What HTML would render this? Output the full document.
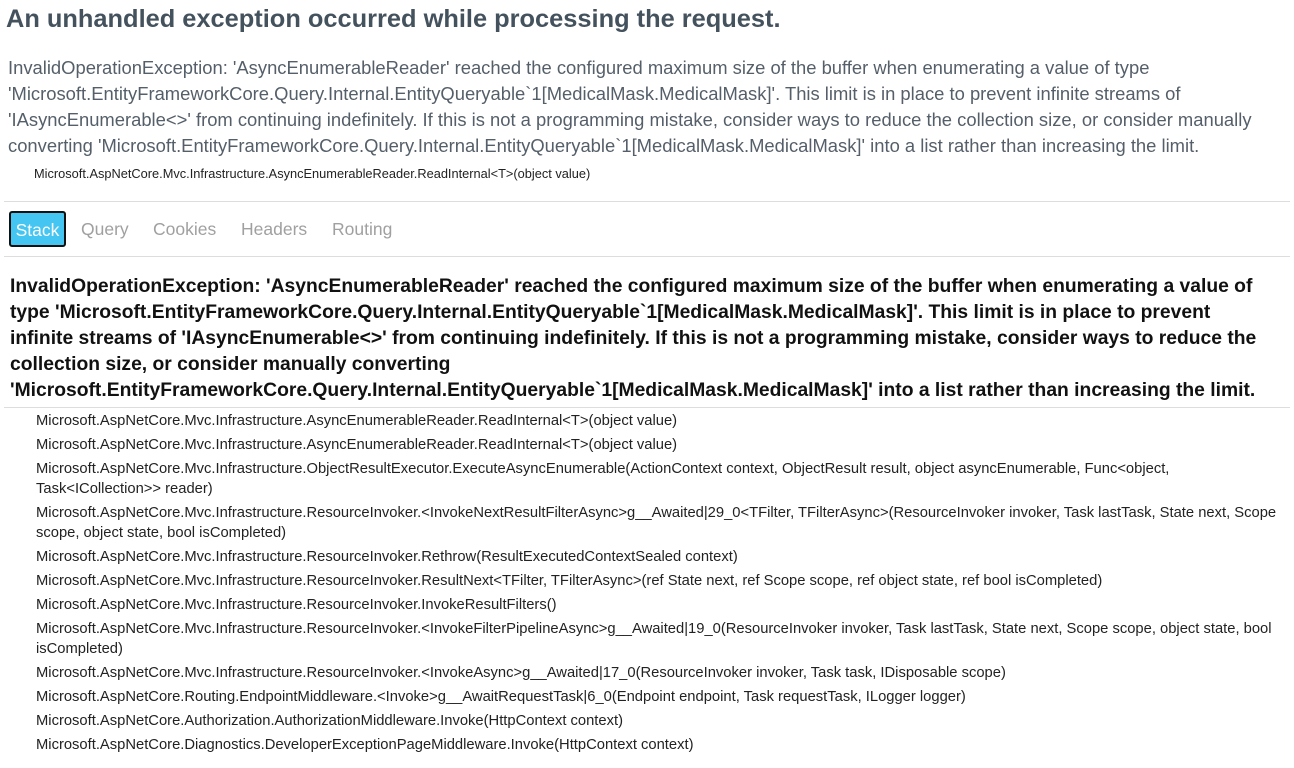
<!DOCTYPE html>
<html><head><style>
body{margin:0;background:#fff;font-family:"Liberation Sans",sans-serif;color:#222;}
.abs{position:absolute;white-space:nowrap;}
h1{position:absolute;left:6px;top:4px;margin:0;font-size:25.4px;color:#44525e;font-weight:bold;line-height:30px;white-space:nowrap;}
.p{position:absolute;left:8px;top:55px;font-size:18.4px;line-height:26px;color:#555f69;white-space:nowrap;}
.loc{position:absolute;left:34px;top:166px;font-size:12.8px;color:#222;}
.hr{position:absolute;left:4px;width:1286px;height:1px;background:#ddd;}
.tab{position:absolute;top:219px;font-size:17.5px;color:#a0a0a0;}
.sel{position:absolute;left:9px;top:211px;width:53px;height:32px;background:#44c5f2;border:2px solid #111;border-radius:3px;color:#fff;font-size:17.5px;line-height:34px;text-align:center;}
.b{position:absolute;left:10px;top:274px;font-size:19.3px;font-weight:bold;line-height:26px;color:#111;white-space:nowrap;}
.f{position:absolute;left:36px;font-size:14.75px;line-height:20px;color:#222;white-space:nowrap;margin-top:1px;}
</style></head><body>
<h1>An unhandled exception occurred while processing the request.</h1>
<div class="p">InvalidOperationException: 'AsyncEnumerableReader' reached the configured maximum size of the buffer when enumerating a value of type<br>'Microsoft.EntityFrameworkCore.Query.Internal.EntityQueryable`1[MedicalMask.MedicalMask]'. This limit is in place to prevent infinite streams of<br>'IAsyncEnumerable&lt;&gt;' from continuing indefinitely. If this is not a programming mistake, consider ways to reduce the collection size, or consider manually<br>converting 'Microsoft.EntityFrameworkCore.Query.Internal.EntityQueryable`1[MedicalMask.MedicalMask]' into a list rather than increasing the limit.</div>
<div class="abs loc">Microsoft.AspNetCore.Mvc.Infrastructure.AsyncEnumerableReader.ReadInternal&lt;T&gt;(object value)</div>
<div class="hr" style="top:201px"></div>
<div class="sel">Stack</div>
<div class="abs tab" style="left:81px">Query</div>
<div class="abs tab" style="left:153px">Cookies</div>
<div class="abs tab" style="left:241px">Headers</div>
<div class="abs tab" style="left:332px">Routing</div>
<div class="hr" style="top:256px"></div>
<div class="b">InvalidOperationException: 'AsyncEnumerableReader' reached the configured maximum size of the buffer when enumerating a value of<br>type 'Microsoft.EntityFrameworkCore.Query.Internal.EntityQueryable`1[MedicalMask.MedicalMask]'. This limit is in place to prevent<br>infinite streams of 'IAsyncEnumerable&lt;&gt;' from continuing indefinitely. If this is not a programming mistake, consider ways to reduce the<br>collection size, or consider manually converting<br>'Microsoft.EntityFrameworkCore.Query.Internal.EntityQueryable`1[MedicalMask.MedicalMask]' into a list rather than increasing the limit.</div>
<div class="hr" style="top:407px"></div>
<div class="f" style="top:410px">Microsoft.AspNetCore.Mvc.Infrastructure.AsyncEnumerableReader.ReadInternal&lt;T&gt;(object value)</div>
<div class="f" style="top:434px">Microsoft.AspNetCore.Mvc.Infrastructure.AsyncEnumerableReader.ReadInternal&lt;T&gt;(object value)</div>
<div class="f" style="top:458px">Microsoft.AspNetCore.Mvc.Infrastructure.ObjectResultExecutor.ExecuteAsyncEnumerable(ActionContext context, ObjectResult result, object asyncEnumerable, Func&lt;object,<br>Task&lt;ICollection&gt;&gt; reader)</div>
<div class="f" style="top:502px">Microsoft.AspNetCore.Mvc.Infrastructure.ResourceInvoker.&lt;InvokeNextResultFilterAsync&gt;g__Awaited|29_0&lt;TFilter, TFilterAsync&gt;(ResourceInvoker invoker, Task lastTask, State next, Scope<br>scope, object state, bool isCompleted)</div>
<div class="f" style="top:546px">Microsoft.AspNetCore.Mvc.Infrastructure.ResourceInvoker.Rethrow(ResultExecutedContextSealed context)</div>
<div class="f" style="top:570px">Microsoft.AspNetCore.Mvc.Infrastructure.ResourceInvoker.ResultNext&lt;TFilter, TFilterAsync&gt;(ref State next, ref Scope scope, ref object state, ref bool isCompleted)</div>
<div class="f" style="top:594px">Microsoft.AspNetCore.Mvc.Infrastructure.ResourceInvoker.InvokeResultFilters()</div>
<div class="f" style="top:618px">Microsoft.AspNetCore.Mvc.Infrastructure.ResourceInvoker.&lt;InvokeFilterPipelineAsync&gt;g__Awaited|19_0(ResourceInvoker invoker, Task lastTask, State next, Scope scope, object state, bool<br>isCompleted)</div>
<div class="f" style="top:662px">Microsoft.AspNetCore.Mvc.Infrastructure.ResourceInvoker.&lt;InvokeAsync&gt;g__Awaited|17_0(ResourceInvoker invoker, Task task, IDisposable scope)</div>
<div class="f" style="top:686px">Microsoft.AspNetCore.Routing.EndpointMiddleware.&lt;Invoke&gt;g__AwaitRequestTask|6_0(Endpoint endpoint, Task requestTask, ILogger logger)</div>
<div class="f" style="top:710px">Microsoft.AspNetCore.Authorization.AuthorizationMiddleware.Invoke(HttpContext context)</div>
<div class="f" style="top:734px">Microsoft.AspNetCore.Diagnostics.DeveloperExceptionPageMiddleware.Invoke(HttpContext context)</div>
</body></html>
